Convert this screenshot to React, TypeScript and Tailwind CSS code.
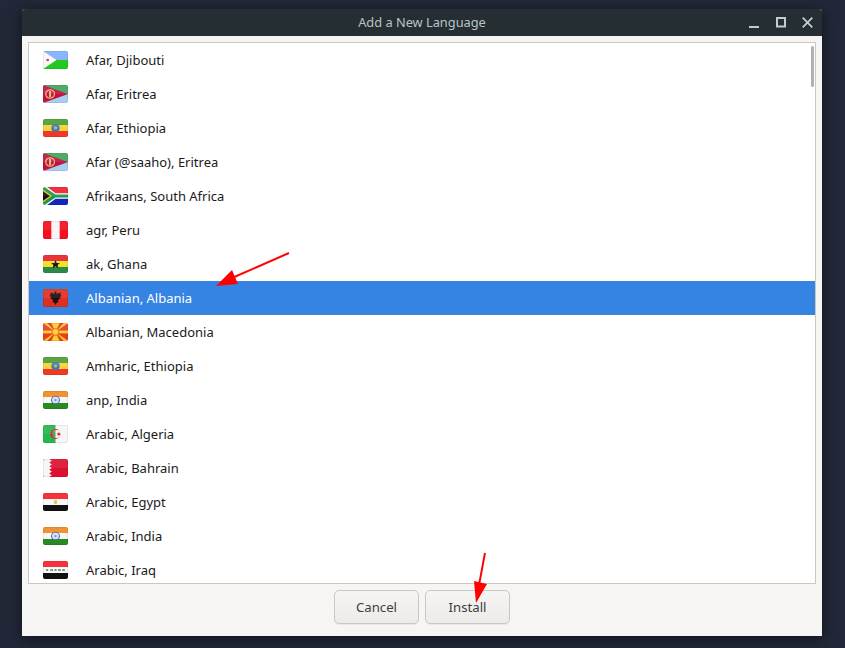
import React from 'react';

type FlagName =
  | 'dj' | 'er' | 'et' | 'za' | 'pe' | 'gh' | 'al' | 'mk' | 'in' | 'dz' | 'bh' | 'eg' | 'iq';

const Stripes = ({ colors }: { colors: string[] }) => (
  <>
    {colors.map((c, i) => (
      <rect key={i} x="0" y={(i * 18) / colors.length} width="24" height={18 / colors.length} fill={c} />
    ))}
  </>
);

const flagArt: Record<FlagName, React.ReactNode> = {
  dj: (
    <>
      <rect width="24" height="9" fill="#7fb0ff" />
      <rect y="9" width="24" height="9" fill="#22c91f" />
      <path d="M0 0L13 9L0 18Z" fill="#f8f8f8" />
      <circle cx="4.5" cy="9" r="1.3" fill="#e8303a" />
    </>
  ),
  er: (
    <>
      <rect width="24" height="9" fill="#41a45a" />
      <rect y="9" width="24" height="9" fill="#a9cdee" />
      <path d="M0 0L24 9L0 18Z" fill="#c0123f" />
      <circle cx="6.8" cy="9" r="4.2" fill="none" stroke="#e8b878" strokeWidth="1.2" />
      <rect x="5.8" y="6" width="2" height="6" fill="#e8b878" />
    </>
  ),
  et: (
    <>
      <Stripes colors={['#4c9e2f', '#f5d33a', '#ee3a24']} />
      <circle cx="12" cy="9" r="4" fill="#3f76ba" />
      <circle cx="12" cy="9" r="1.8" fill="#a8b860" />
    </>
  ),
  za: (
    <>
      <rect width="24" height="9" fill="#ee2030" />
      <rect y="9" width="24" height="9" fill="#1226b8" />
      <path d="M0 0H4L12 6.2H24V11.8H12L4 18H0Z" fill="#fff" />
      <path d="M0 0.8L1.8 0.2L12 7.4H24V10.6H12L1.8 17.8L0 17.2Z" fill="#1a9a4c" />
      <path d="M0 2.6L8.6 9L0 15.4Z" fill="#f4c020" />
      <path d="M0 4.2L6.6 9L0 13.8Z" fill="#111" />
    </>
  ),
  pe: (
    <>
      <rect width="24" height="18" fill="#f5f5f5" />
      <rect width="8" height="18" fill="#f4101c" />
      <rect x="16" width="8" height="18" fill="#f4101c" />
    </>
  ),
  gh: (
    <>
      <Stripes colors={['#e8242a', '#f8e020', '#2a8a4a']} />
      <path d="M12 4.8L13.2 8H16.4L13.9 10L14.8 13.2L12 11.3L9.2 13.2L10.1 10L7.6 8H10.8Z" fill="#141414" />
    </>
  ),
  al: (
    <>
      <rect width="24" height="18" fill="#de2f20" />
      <path d="M11.2 2.5H12.8L13 5L16.8 3.6V6L17.8 6.4L16.4 8L17 9L15 10.4L14.2 11.6L15 13.6L13.2 13.4L12 16L10.8 13.4L9 13.6L9.8 11.6L9 10.4L7 9L7.6 8L6.2 6.4L7.2 6V3.6L11 5Z" fill="#1b1010" />
    </>
  ),
  mk: (
    <>
      <rect width="24" height="18" fill="#e8401f" />
      <path d="M0 0H4L12 9L8 0H16L12 9L20 0H24L12 9L24 18H20L12 9L16 18H8L12 9L4 18H0L12 9Z" fill="#f9cf2e" />
      <rect x="0" y="7.6" width="24" height="2.8" fill="#f9cf2e" />
      <circle cx="12" cy="9" r="3.4" fill="#f9cf2e" stroke="#e8401f" strokeWidth="0.7" />
    </>
  ),
  in: (
    <>
      <Stripes colors={['#ee8a22', '#f6f6f6', '#2a8a22']} />
      <circle cx="12" cy="9" r="3.8" fill="#dfe6f2" stroke="#4a6cb4" strokeWidth="1.1" />
      <circle cx="12" cy="9" r="1.2" fill="#4a6cb4" opacity="0.7" />
    </>
  ),
  dz: (
    <>
      <rect width="24" height="18" fill="#f6f6f6" />
      <rect width="12" height="18" fill="#22b84a" />
      <circle cx="12" cy="9" r="5" fill="#e8203a" />
      <circle cx="13.4" cy="9" r="4" fill="#f6f6f6" />
      <path d="M13.4 5A4 4 0 0 0 13.4 13H12V5Z" fill="#22b84a" />
      <circle cx="15.2" cy="9" r="1.6" fill="#e8203a" />
    </>
  ),
  bh: (
    <>
      <rect width="24" height="18" fill="#dc1030" />
      <path d="M0 0H6L8.5 1.8L6 3.6L8.5 5.4L6 7.2L8.5 9L6 10.8L8.5 12.6L6 14.4L8.5 16.2L6 18H0Z" fill="#f6f6f6" />
    </>
  ),
  eg: (
    <>
      <Stripes colors={['#f4222a', '#f8f8f8', '#111']} />
      <rect x="10.5" y="7" width="3" height="4" rx="1" fill="#e6c44c" />
    </>
  ),
  iq: (
    <>
      <Stripes colors={['#f4222a', '#f8f8f8', '#111']} />
      <path d="M3 9H5M7 9H9.5M11 9H13M14.5 9H17M18.5 9H21" stroke="#2f7a48" strokeWidth="1.5" />
    </>
  ),
};

const Flag = ({ name }: { name: FlagName }) => (
  <svg viewBox="0 0 24 18" className="h-[18px] w-[25px] shrink-0 rounded-[2px]" preserveAspectRatio="none">
    {flagArt[name]}
    <rect x="0.25" y="0.25" width="23.5" height="17.5" rx="1.5" fill="none" stroke="#000" strokeOpacity="0.18" strokeWidth="0.5" />
    <rect x="0" y="0" width="24" height="9" fill="#fff" opacity="0.08" />
  </svg>
);

const languages: { label: string; flag: FlagName }[] = [
  { label: 'Afar, Djibouti', flag: 'dj' },
  { label: 'Afar, Eritrea', flag: 'er' },
  { label: 'Afar, Ethiopia', flag: 'et' },
  { label: 'Afar (@saaho), Eritrea', flag: 'er' },
  { label: 'Afrikaans, South Africa', flag: 'za' },
  { label: 'agr, Peru', flag: 'pe' },
  { label: 'ak, Ghana', flag: 'gh' },
  { label: 'Albanian, Albania', flag: 'al' },
  { label: 'Albanian, Macedonia', flag: 'mk' },
  { label: 'Amharic, Ethiopia', flag: 'et' },
  { label: 'anp, India', flag: 'in' },
  { label: 'Arabic, Algeria', flag: 'dz' },
  { label: 'Arabic, Bahrain', flag: 'bh' },
  { label: 'Arabic, Egypt', flag: 'eg' },
  { label: 'Arabic, India', flag: 'in' },
  { label: 'Arabic, Iraq', flag: 'iq' },
];

const buttonClass =
  'h-[34px] w-[85px] rounded-[5px] border border-[#cdc7c2] bg-gradient-to-b from-[#f6f5f4] to-[#edebe9] pt-[2px] text-[13.2px] text-[#3d3d3d] shadow-[0_1px_0_rgba(0,0,0,0.05)]';

export default function App() {
  return (
    <div className="relative h-[648px] w-[845px] overflow-hidden bg-[#222838] pl-[22px] pt-[9px] font-['Noto_Sans',sans-serif]">
      <div className="flex h-[627px] w-[800px] flex-col overflow-hidden rounded-t-[3px] bg-[#f6f5f4] shadow-[0_3px_14px_rgba(0,0,0,0.55)]">
        {/* title bar */}
        <div className="relative flex h-[27px] shrink-0 items-center justify-center bg-[#252f33] text-[12.8px] text-[#b9c3c6]">
          <span>Add a New Language</span>
          <div className="absolute right-[9px] top-0 flex h-full items-center gap-[16px]">
            <svg width="11" height="12" viewBox="0 0 11 12">
              <rect x="1" y="9" width="10" height="2" fill="#c3ccd0" />
            </svg>
            <svg width="11" height="12" viewBox="0 0 11 12">
              <rect x="2" y="1" width="8" height="8.5" fill="none" stroke="#c3ccd0" strokeWidth="2" />
            </svg>
            <svg width="11" height="12" viewBox="0 0 11 12">
              <path d="M0.7 0.7L10.3 10.3M10.3 0.7L0.7 10.3" stroke="#c3ccd0" strokeWidth="1.8" />
            </svg>
          </div>
        </div>

        {/* list */}
        <div className="px-[6px] pt-[6px]">
          <div className="relative h-[542px] overflow-hidden border border-[#cdc7c2] bg-white">
            {languages.map((lang, i) => (
              <div
                key={lang.label}
                className={
                  i === 7
                    ? 'flex h-[34px] items-center bg-[#3584e4] pl-[14px] text-[13px] text-white'
                    : 'flex h-[34px] items-center pl-[14px] text-[13px] text-[#1a1a1a]'
                }
              >
                <Flag name={lang.flag} />
                <span className="ml-[18px] pt-[2px]">{lang.label}</span>
              </div>
            ))}
            <div className="absolute right-[1px] top-[3px] h-[41px] w-[3px] rounded-full bg-[#b0b1b4]" />
          </div>
        </div>

        {/* actions */}
        <div className="flex flex-1 justify-center gap-[6px] pt-[6px]">
          <button className={buttonClass}>Cancel</button>
          <button className={buttonClass}>Install</button>
        </div>
      </div>

      {/* annotation arrows */}
      <svg className="absolute left-0 top-0" width="845" height="648" viewBox="0 0 845 648" fill="none">
        <path d="M289 253L232 278" stroke="#f00" strokeWidth="2" />
        <path d="M216 286L232 270L238 284Z" fill="#f00" />
        <path d="M485 553L479 585" stroke="#f00" strokeWidth="2" />
        <path d="M476 603L474 581L487 584Z" fill="#f00" />
      </svg>
    </div>
  );
}
